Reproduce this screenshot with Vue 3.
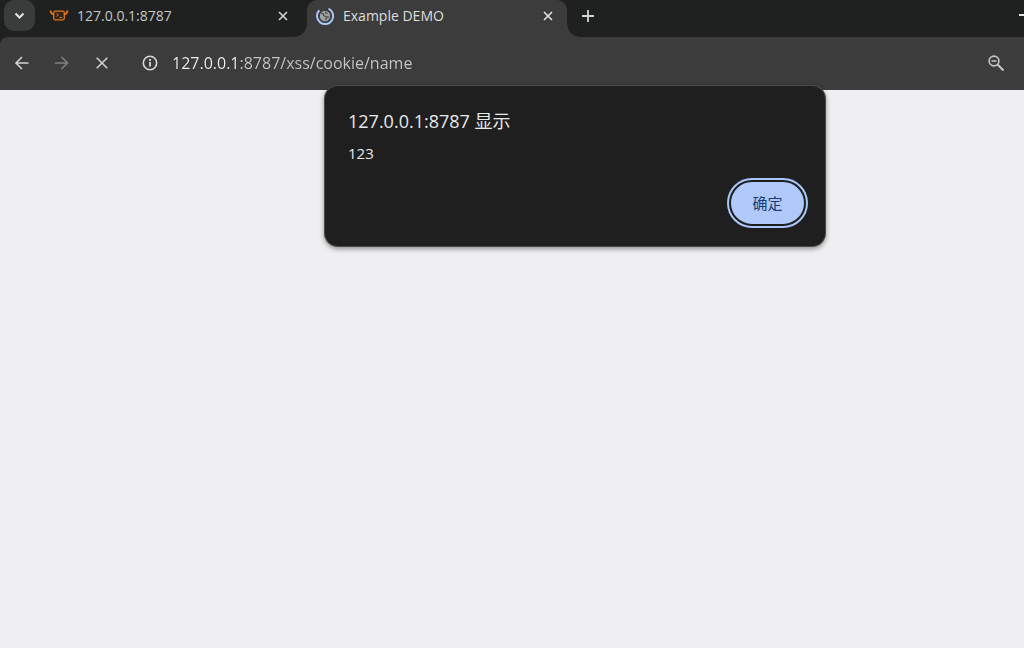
<script setup>
import { ref } from 'vue'

const address = ref('127.0.0.1:8787/xss/cookie/name')
const dialogOpen = ref(true)
</script>

<template>
  <div class="browser">
    <header class="tab-strip">
      <button class="tab-search" type="button" aria-label="Search tabs">
        <svg width="12" height="12" viewBox="0 0 12 12"><path d="M1.500 3.500l4 4 4-4" fill="none" stroke="#e3e3e3" stroke-width="2" /></svg>
      </button>
      <div class="tab">
        <svg class="favicon" width="20" height="20" viewBox="0 0 20 20">
          <path d="M1.500 4.500L2 6.500Q3 8.500 5 8.500M18.500 4.500L18 6.500Q17 8.500 15 8.500" fill="none" stroke="#e87613" stroke-width="1.800" />
          <rect x="4.700" y="5.200" width="10.600" height="8.600" rx="1.500" fill="#30251c" stroke="#e87613" stroke-width="1.300" />
          <path d="M7.500 7.500l1.800 1.500-1.800 1.500M10.500 11.500h2.500" fill="none" stroke="#e87613" stroke-width="1" />
        </svg>
        <span class="tab-title">127.0.0.1:8787</span>
        <button class="close" type="button" aria-label="Close tab">
          <svg width="10" height="10" viewBox="0 0 10 10"><path d="M1 1l8 8M9 1l-8 8" stroke="#d2d4d3" stroke-width="1.600" /></svg>
        </button>
      </div>
      <div class="tab active">
        <svg class="favicon" width="20" height="20" viewBox="0 0 20 20">
          <circle cx="10" cy="10" r="5.200" fill="#a2a5a7" />
          <path d="M6 7.500c2-.5 3 .5 2.500 1.500s1.500 1 2.500 1.500 1 2-1 3.500M10.500 5.500c-.5 1.500.5 2 2 2M13.500 10c-1 .5-.5 1.500 0 2" fill="none" stroke="#4b4d4e" stroke-width="1.300" />
          <path d="M13.500 2.600A8.100 8.100 0 1 1 4.300 4.300" fill="none" stroke="#a8c7fa" stroke-width="2" />
        </svg>
        <span class="tab-title">Example DEMO</span>
        <button class="close" type="button" aria-label="Close tab">
          <svg width="10" height="10" viewBox="0 0 10 10"><path d="M1 1l8 8M9 1l-8 8" stroke="#e3e3e3" stroke-width="1.600" /></svg>
        </button>
      </div>
      <button class="new-tab" type="button" aria-label="New tab">
        <svg width="12" height="12" viewBox="0 0 12 12"><path d="M6 0v12M0 6h12" stroke="#d2d4d3" stroke-width="1.800" /></svg>
      </button>
      <button class="minimize" type="button" aria-label="Minimize"></button>
    </header>

    <nav class="toolbar">
      <button class="tool" type="button" aria-label="Back">
        <svg width="16" height="16" viewBox="0 0 16 16"><path d="M14.500 8H2M8 2L2 8l6 6" fill="none" stroke="#d0d0d0" stroke-width="1.600" /></svg>
      </button>
      <button class="tool" type="button" aria-label="Forward" disabled>
        <svg width="16" height="16" viewBox="0 0 16 16"><path d="M1 8h12.500M7.500 2l6 6-6 6" fill="none" stroke="#818181" stroke-width="1.600" /></svg>
      </button>
      <button class="tool" type="button" aria-label="Stop loading">
        <svg width="16" height="16" viewBox="0 0 16 16"><path d="M2.700 2.700l10.600 10.600M13.300 2.700L2.700 13.300" stroke="#d0d0d0" stroke-width="1.600" /></svg>
      </button>
      <div class="omnibox">
        <button class="site-info" type="button" aria-label="View site information">
          <svg width="16" height="16" viewBox="0 0 16 16"><circle cx="8" cy="8" r="6.700" fill="none" stroke="#d8d8d8" stroke-width="1.600" /><path d="M8 7v4.500M8 4v2" stroke="#d8d8d8" stroke-width="1.800" /></svg>
        </button>
        <input v-model="address" class="address" type="text" aria-label="Address" spellcheck="false">
        <button class="zoom" type="button" aria-label="Zoom">
          <svg width="16" height="16" viewBox="0 0 16 16"><circle cx="6" cy="6" r="4.900" fill="none" stroke="#c7c7c7" stroke-width="1.600" /><path d="M9.500 9.500l6 6" stroke="#c7c7c7" stroke-width="2" /><path d="M3.500 6h5" stroke="#c7c7c7" stroke-width="1.500" /></svg>
        </button>
      </div>
    </nav>

    <main class="page"></main>

    <section v-if="dialogOpen" class="dialog" role="alertdialog" aria-labelledby="dialog-title" aria-describedby="dialog-text">
      <h1 id="dialog-title">127.0.0.1:8787 显示</h1>
      <p id="dialog-text">123</p>
      <button class="confirm" type="button" @click="dialogOpen = false">确定</button>
    </section>
  </div>
</template>

<style>
body {
  margin: 0;
  background: #efeff1;
}
</style>

<style scoped>
.browser {
  position: relative;
  display: flex;
  flex-direction: column;
  min-height: 100vh;
  overflow: hidden;
  background: #1f2120;
  font-family: "Open Sans", "Noto Sans CJK SC", sans-serif;
}

button {
  display: flex;
  align-items: center;
  justify-content: center;
  margin: 0;
  padding: 0;
  border: 0;
  background: none;
}

svg {
  display: block;
  flex: none;
}

.tab-strip {
  display: flex;
  height: 37px;
  background: #1f2120;
}

.tab-search {
  width: 31px;
  height: 31px;
  margin: 0 12px 0 4px;
  border-radius: 10px;
  background: #3a3b3b;
}

.tab {
  position: relative;
  display: flex;
  box-sizing: border-box;
  width: 260px;
  height: 37px;
  padding: 0 18px 6px 2px;
  align-items: center;
  color: #c4c6c5;
  font-size: 14px;
}

.tab.active {
  padding-right: 13px;
  padding-left: 8px;
  border-radius: 10px 10px 0 0;
  background: #3c3c3c;
  color: #dedede;
}

.tab.active::before,
.tab.active::after {
  position: absolute;
  bottom: 0;
  width: 12px;
  height: 12px;
  content: "";
}

.tab.active::before {
  right: 100%;
  background: radial-gradient(circle at 0 0, transparent 11px, #3c3c3c 12px);
}

.tab.active::after {
  left: 100%;
  background: radial-gradient(circle at 100% 0, transparent 11px, #3c3c3c 12px);
}

.favicon {
  margin-right: 8px;
}

.tab-title {
  flex: 1;
  white-space: nowrap;
}

.close {
  width: 12px;
  height: 20px;
}

.new-tab {
  width: 20px;
  height: 31px;
  margin-left: 11px;
}

.minimize {
  box-sizing: border-box;
  width: 5px;
  height: 16px;
  margin-left: auto;
  border-bottom: 2px solid #e3e3e3;
  border-radius: 0;
}

.toolbar {
  display: flex;
  box-sizing: border-box;
  height: 53px;
  padding: 0 0 2px 2px;
  align-items: center;
  border-radius: 8px 0 0;
  background: #3c3c3c;
}

.tool {
  width: 40px;
  height: 40px;
}

.omnibox {
  display: flex;
  flex: 1;
  min-width: 0;
  padding: 0 20px;
  align-items: center;
}

.site-info,
.zoom {
  width: 16px;
  height: 32px;
}

.address {
  flex: 1;
  min-width: 0;
  height: 32px;
  margin: 0 14px;
  padding: 0;
  border: 0;
  outline: 0;
  background: linear-gradient(90deg, #f0f0f0 67px, #c7c7c7 67px);
  background-clip: text;
  -webkit-background-clip: text;
  color: transparent;
  caret-color: #e8e8e8;
  font: 16px "Open Sans", sans-serif;
}

.page {
  flex: 1;
  background: #efeff1;
}

.dialog {
  position: absolute;
  top: 86px;
  left: 325px;
  display: flex;
  flex-direction: column;
  box-sizing: border-box;
  width: 500px;
  padding: 21px 19px 20px 23px;
  border-radius: 13px;
  background: #1f1f1f;
  box-shadow: 0 0 0 1px #4a4a4a, 0 2px 5px 1px rgba(0, 0, 0, 0.4);
  color: #e8e8e8;
}

h1 {
  margin: 0;
  font-size: 18px;
  font-weight: 400;
  line-height: 28px;
}

p {
  margin: 6px 0 15px;
  font-size: 15px;
  line-height: 24px;
}

.confirm {
  align-self: flex-end;
  width: 77px;
  height: 46px;
  padding-bottom: 2px;
  border: 2px solid #1f1f1f;
  border-radius: 23px;
  outline: 2px solid #a8c7fa;
  background: #afcaf9;
  color: #173b76;
  font-family: "Noto Sans CJK SC", sans-serif;
  font-size: 15px;
}
</style>
